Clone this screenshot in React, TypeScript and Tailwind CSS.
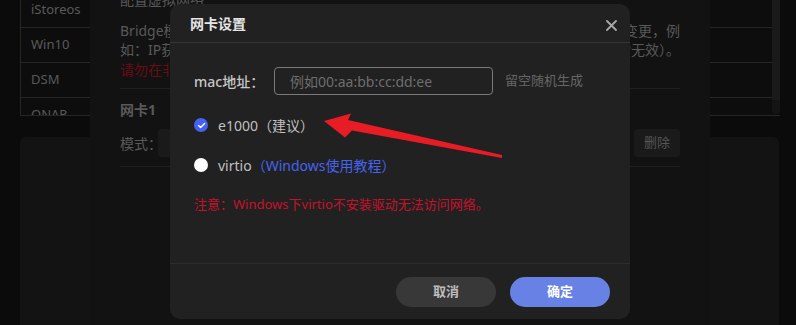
import React from "react";

export default function App() {
  return (
    <div className="relative w-[796px] h-[325px] overflow-hidden bg-[#0b0b0b] font-['Noto_Sans','Noto_Sans_CJK_SC',sans-serif]">
      <div className="flex h-full pl-[20px]">
        {/* left list column */}
        <div className="w-[70px] shrink-0 flex flex-col">
          <div className="h-[116px] overflow-hidden border-l border-b border-[#262626] bg-[#0d0d0d]">
            <div className="-mt-[7px]">
              {["iStoreos", "Win10", "DSM", "QNAP"].map((t) => (
                <div
                  key={t}
                  className="h-[35px] border-b border-[#262626] flex items-center pl-[10px] text-[13px] text-[#5a5a5a]"
                >
                  {t}
                </div>
              ))}
            </div>
          </div>
          <div className="mt-[21px] flex-1 rounded-tl-[6px] bg-[#131313]" />
        </div>

        {/* middle panel */}
        <div className="w-[620px] shrink-0 bg-[#121212] px-[30px] text-[14px] text-[#595959]">
          <div className="-mt-[10px] leading-[20px] whitespace-nowrap">配置虚拟网络：</div>
          <div className="mt-[11px] leading-[19px]">
            <div className="flex justify-between whitespace-nowrap">
              <span>Bridge模式下，虚拟机将获得与主机同网段的IP</span>
              <span>，MAC地址请勿随意变更，例</span>
            </div>
            <div className="flex justify-between whitespace-nowrap">
              <span>如：IP获取方式</span>
              <span>为DHCP时重启后可能失效（静态IP无效）。</span>
            </div>
          </div>
          <div className="mt-[1px] leading-[20px] text-[#6a0c15] whitespace-nowrap">
            请勿在非必要情况下修改网卡配置。
          </div>
          <div className="mt-[8px] border-t border-[#1f1f1f]" />
          <div className="mt-[11px] leading-[20px] font-bold">网卡1</div>
          <div className="mt-[9px] h-[28px] flex items-center">
            <span className="w-[38px] whitespace-nowrap">模式：</span>
            <div className="flex-1 h-[28px] rounded-[4px] bg-[#1a1a1a]" />
            <div className="ml-[8px] w-[46px] h-[28px] rounded-[4px] bg-[#1a1a1a] flex items-center justify-center text-[13px] text-[#555]">
              删除
            </div>
          </div>
          <div className="mt-[9px] border-t border-[#1f1f1f]" />
        </div>

        {/* right list column */}
        <div className="w-[70px] shrink-0 flex flex-col">
          <div className="h-[116px] border-b border-[#262626] bg-[#0d0d0d] flex overflow-hidden">
            <div className="flex-1 overflow-hidden">
              <div className="-mt-[7px]">
                {[0, 1, 2, 3].map((i) => (
                  <div key={i} className="h-[35px] border-b border-[#262626]" />
                ))}
              </div>
            </div>
            <div className="w-[8px] h-[114px] rounded-b-[4px] bg-[#141414]">
              <div className="h-[100px] bg-[#1a1a1a]" />
            </div>
          </div>
          <div className="mt-[21px] mr-[1px] flex-1 rounded-tr-[6px] bg-[#131313]" />
        </div>
      </div>

      {/* modal */}
      <div className="absolute left-[170px] top-[4px] w-[460px] h-[315px] rounded-[10px] bg-[#212121] flex flex-col">
        <div className="h-[39px] border-b border-[#353535] flex items-center justify-between pl-[20px] pr-[13px]">
          <span className="text-[14px] font-bold text-[#e6e6e6]">网卡设置</span>
          <svg width="11" height="11" viewBox="0 0 11 11" className="mt-[4px]">
            <path d="M1 1L10 10M10 1L1 10" stroke="#a8a8a8" strokeWidth="1.8" strokeLinecap="round" />
          </svg>
        </div>

        <div className="flex-1 pl-[24px] pt-[24px]">
          <div className="h-[28px] flex items-center">
            <span className="w-[80px] text-[14px] font-medium text-[#c8c8c8] whitespace-nowrap">mac地址：</span>
            <input
              readOnly
              placeholder="例如00:aa:bb:cc:dd:ee"
              className="w-[219px] h-[28px] border border-[#7a7a7a] rounded-[4px] bg-transparent pl-[15px] text-[14px] outline-none placeholder:text-[#6e6e6e]"
            />
            <span className="ml-[12px] text-[13px] text-[#666]">留空随机生成</span>
          </div>

          <div className="mt-[20px] h-[20px] flex items-center">
            <span className="w-[14px] h-[14px] rounded-full bg-[#4461f2] flex items-center justify-center">
              <svg width="9" height="9" viewBox="0 0 9 9">
                <path d="M1.5 4.6L3.6 6.6L7.6 2.4" fill="none" stroke="#fff" strokeWidth="1.4" strokeLinecap="round" strokeLinejoin="round" />
              </svg>
            </span>
            <span className="ml-[10px] text-[14px] text-[#c0c0c0]">e1000（建议）</span>
          </div>

          <div className="mt-[20px] h-[20px] flex items-center">
            <span className="w-[14px] h-[14px] rounded-full bg-white" />
            <span className="ml-[10px] text-[14px] text-[#c0c0c0]">virtio</span>
            <span className="text-[14px] text-[#4563ef]">（Windows使用教程）</span>
          </div>

          <div className="mt-[19px] leading-[20px] text-[13px] text-[#c5122b]">
            注意：Windows下virtio不安装驱动无法访问网络。
          </div>
        </div>

        <div className="h-[56px] border-t border-[#2c2c2c] flex justify-end items-start pt-[13px] pr-[20px] gap-[14px]">
          <div className="w-[100px] h-[30px] rounded-full bg-[#383838] flex items-center justify-center text-[13px] font-semibold text-[#bdbdbd]">
            取消
          </div>
          <div className="w-[100px] h-[30px] rounded-full bg-[#6781e4] flex items-center justify-center text-[13px] font-semibold text-white">
            确定
          </div>
        </div>
      </div>

      {/* red annotation arrow */}
      <svg
        className="absolute left-0 top-0 pointer-events-none"
        width="796"
        height="325"
        viewBox="0 0 796 325"
      >
        <polygon
          points="324,121 351,113.5 348,120 502,155 502,158 352,130.5 345,137.5"
          fill="#e81c24"
        />
      </svg>
    </div>
  );
}
